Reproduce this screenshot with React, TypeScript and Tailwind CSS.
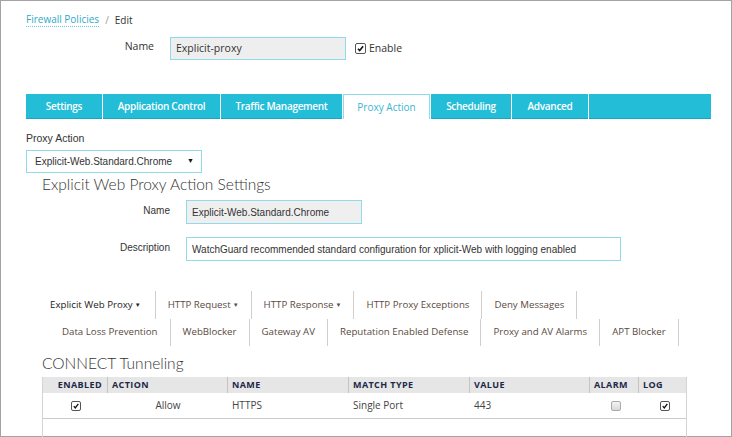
import React from 'react'

const ui = { fontFamily: '"Open Sans", "Liberation Sans", sans-serif' }
const arial = { fontFamily: '"Liberation Sans", Arial, sans-serif' }
const light = { fontFamily: 'Lato, "Open Sans", sans-serif' }

function Check({ checked = false, size = 10 }: { checked?: boolean; size?: number }) {
  return (
    <span
      className={
        checked
          ? 'inline-flex items-center justify-center rounded-[2px] border border-[#555] bg-white'
          : 'inline-flex items-center justify-center rounded-[2px] border border-[#a9a9a9] bg-gradient-to-b from-[#f4f4f4] to-[#d9d9d9]'
      }
      style={{ width: size, height: size }}
    >
      {checked && (
        <svg viewBox="0 0 10 10" className="h-full w-full">
          <path d="M2.2 5.2 L4.1 7.3 L7.9 2.4" fill="none" stroke="#111" strokeWidth="1.7" />
        </svg>
      )}
    </span>
  )
}

const mainTabs = [
  { label: 'Settings', w: 'w-[76px]' },
  { label: 'Application Control', w: 'w-[117px]' },
  { label: 'Traffic Management', w: 'w-[121px]' },
  { label: 'Proxy Action', w: 'w-[87px]', active: true },
  { label: 'Scheduling', w: 'w-[80px]' },
  { label: 'Advanced', w: 'w-[76px]' },
  { label: '', w: 'w-[122px]' },
]

const subRow1 = [
  { label: 'Explicit Web Proxy', drop: true, dark: true },
  { label: 'HTTP Request', drop: true },
  { label: 'HTTP Response', drop: true },
  { label: 'HTTP Proxy Exceptions' },
  { label: 'Deny Messages' },
]

const subRow2 = [
  'Data Loss Prevention',
  'WebBlocker',
  'Gateway AV',
  'Reputation Enabled Defense',
  'Proxy and AV Alarms',
  'APT Blocker',
]

const cols = ['ENABLED', 'ACTION', 'NAME', 'MATCH TYPE', 'VALUE', 'ALARM', 'LOG']

export default function App() {
  return (
    <div className="h-[437px] w-[732px] overflow-hidden bg-white">
      <div className="h-[437px] w-[732px] border border-[#a3a3a3] pl-[25px]" style={ui}>
        {/* breadcrumb */}
        <div className="flex items-center gap-[6px] pt-[11px] text-[10px] leading-[14px]">
          <span className="border-b border-dotted border-[#6fc7dc] text-[#2fa9c9]">Firewall Policies</span>
          <span className="text-[#999]">/</span>
          <span className="text-[#333]">Edit</span>
        </div>

        {/* name row */}
        <div className="mt-[10px] flex items-center">
          <div className="w-[128px] pb-[3px] text-right text-[10.5px] text-[#333]">Name</div>
          <div className="ml-[16px] flex h-[23px] w-[176px] items-center border border-[#8fdbe9] bg-[#eeeeee] px-[5px] text-[10.5px] text-[#333]">
            Explicit-proxy
          </div>
          <div className="ml-[9px] flex items-center gap-[3px] text-[10.5px] text-[#333]">
            <Check checked size={11} />
            <span>Enable</span>
          </div>
        </div>

        {/* main tabs */}
        <div className="mt-[34px] flex h-[25px] gap-px">
          {mainTabs.map((t) =>
            t.active ? (
              <div
                key={t.label}
                className={`${t.w} flex items-center justify-center border-x border-t border-[#8fdbe9] bg-white pt-[1px] text-[10px] text-[#3cb4d0]`}
              >
                {t.label}
              </div>
            ) : (
              <div
                key={t.w + t.label}
                className={`${t.w} flex items-center justify-center border-b border-[#1aa6c0] bg-[#23bdd8] text-[10px] font-semibold tracking-[-0.3px] text-white`}
              >
                {t.label}
              </div>
            )
          )}
        </div>

        {/* proxy action select */}
        <div className="mt-[12px] text-[10.5px] leading-[14px] text-[#333]" style={arial}>
          Proxy Action
        </div>
        <div
          className="mt-[5px] flex h-[23px] w-[176px] items-center justify-between border border-[#8fdbe9] bg-white pl-[8px] pr-[7px] text-[10px] text-[#333]"
          style={arial}
        >
          <span>Explicit-Web.Standard.Chrome</span>
          <span className="text-[7px] text-[#111]">▼</span>
        </div>

        {/* settings section */}
        <div className="pl-[16px]">
          <div className="mt-[2px] text-[15.5px] font-light leading-[18px] text-[#333]" style={light}>
            Explicit Web Proxy Action Settings
          </div>
          <div className="mt-[7px] flex items-center" style={arial}>
            <div className="w-[128px] pb-[3px] text-right text-[10px] text-[#333]">Name</div>
            <div className="ml-[16px] flex h-[24px] w-[176px] items-center border border-[#8fdbe9] bg-[#efefef] px-[5px] text-[10px] text-[#333]">
              Explicit-Web.Standard.Chrome
            </div>
          </div>
          <div className="mt-[13px] flex items-center" style={arial}>
            <div className="w-[128px] pb-[3px] text-right text-[10px] text-[#333]">Description</div>
            <div className="ml-[16px] flex h-[24px] w-[435px] items-center border border-[#8fdbe9] bg-white px-[5px] text-[10px] text-[#333]">
              WatchGuard recommended standard configuration for xplicit-Web with logging enabled
            </div>
          </div>

          {/* sub tabs */}
          <div className="mt-[30px] flex h-[28px]">
            {subRow1.map((s, i) => (
              <div
                key={s.label}
                className={`flex items-center border-r border-[#cfcfcf] text-[9.7px] ${
                  i === 0 ? 'pl-[8px] pr-[14px]' : 'px-[12px]'
                } ${s.dark ? 'text-[#222]' : 'text-[#5a4a40]'}`}
              >
                {s.label}
                {s.drop && <span className="ml-[2px] text-[6px]">▼</span>}
              </div>
            ))}
          </div>
          <div className="flex h-[27px] pl-[8px]">
            {subRow2.map((s) => (
              <div key={s} className="flex items-center border-r border-[#cfcfcf] px-[12px] text-[9.7px] text-[#5a4a40]">
                {s}
              </div>
            ))}
          </div>

          {/* connect tunneling */}
          <div className="mt-[7px] text-[15.5px] font-light leading-[20px] text-[#333]" style={light}>
            CONNECT Tunneling
          </div>
          <div className="mt-[4px] w-[645px] border-x border-[#d4d4d4]">
            <div className="grid h-[16px] grid-cols-[65px_120px_121px_121px_120px_49px_48px] bg-[#e6e6e6] text-[9px] font-bold tracking-[0.4px] text-[#1c2848]">
              {cols.map((c, i) => (
                <div
                  key={c}
                  className={`flex items-center border-[#c4c4c4] ${i < cols.length - 1 ? 'border-r' : ''} ${
                    i === 0 ? 'justify-end pr-[5px]' : 'pl-[4px]'
                  }`}
                >
                  {c}
                </div>
              ))}
            </div>
            <div className="grid h-[26px] grid-cols-[65px_120px_121px_121px_120px_49px_48px] border-b border-[#cccccc] text-[10px] text-[#444]">
              <div className="flex items-center justify-center pl-[1px]">
                <Check checked />
              </div>
              <div className="flex items-center justify-center">Allow</div>
              <div className="flex items-center pl-[4px]">HTTPS</div>
              <div className="flex items-center pl-[4px]">Single Port</div>
              <div className="flex items-center pl-[4px]">443</div>
              <div className="flex items-center justify-center pl-[3px]">
                <Check />
              </div>
              <div className="flex items-center justify-center pl-[3px]">
                <Check checked />
              </div>
            </div>
            <div className="h-[30px]" />
          </div>
        </div>
      </div>
    </div>
  )
}
